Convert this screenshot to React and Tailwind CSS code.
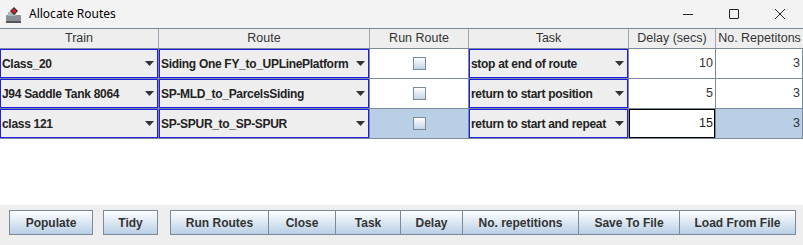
import React from 'react';

const cols = [
  { key: 'train', label: 'Train', w: 'w-[159px]' },
  { key: 'route', label: 'Route', w: 'w-[211px]' },
  { key: 'run', label: 'Run Route', w: 'w-[99px]' },
  { key: 'task', label: 'Task', w: 'w-[160px]' },
  { key: 'delay', label: 'Delay (secs)', w: 'w-[87px]' },
  { key: 'reps', label: 'No. Repetitons', w: 'w-[87px]' },
];

const rows = [
  { train: 'Class_20', route: 'Siding One FY_to_UPLinePlatform', task: 'stop at end of route', delay: 10, reps: 3 },
  { train: 'J94 Saddle Tank 8064', route: 'SP-MLD_to_ParcelsSiding', task: 'return to start position', delay: 5, reps: 3 },
  { train: 'class 121', route: 'SP-SPUR_to_SP-SPUR', task: 'return to start and repeat', delay: 15, reps: 3, selected: true },
];

function Combo({ value }) {
  return (
    <div className="flex h-full w-full items-center border border-[#1f1fe8] bg-[#eeeeee] pl-[1px] pr-[3px]">
      <span className="min-w-0 flex-1 overflow-hidden whitespace-nowrap text-[12px] font-bold tracking-[-0.3px] text-[#222]">{value}</span>
      <svg width="9" height="5" viewBox="0 0 9 5" className="ml-[2px] shrink-0">
        <path d="M0 0h9L4.5 5z" fill="#333" />
      </svg>
    </div>
  );
}

function Check() {
  return (
    <div className="h-[13px] w-[13px] border border-[#7a8a99] bg-gradient-to-b from-white to-[#c4d4e6]" />
  );
}

function TitleIcon() {
  return (
    <svg width="18" height="18" viewBox="0 0 18 18">
      <rect x="1" y="9" width="15" height="6" rx="1" fill="#8a8f96" />
      <rect x="3" y="6" width="8" height="4" fill="#b0b5bb" />
      <path d="M9 1l4 4-4 4-4-4z" fill="#333" />
      <circle cx="9" cy="5" r="2" fill="#e0202a" />
      <rect x="1" y="15" width="15" height="2" fill="#555" />
    </svg>
  );
}

const buttons1 = ['Run Routes', 'Close', 'Task', 'Delay', 'No. repetitions', 'Save To File', 'Load From File'];
const btnW = ['w-[99px]', 'w-[68px]', 'w-[66px]', 'w-[63px]', 'w-[117px]', 'w-[102px]', 'w-[117px]'];

function Btn({ children, className }) {
  return (
    <button
      type="button"
      className={`h-[25px] shrink-0 border border-[#7a8a99] bg-gradient-to-b from-white to-[#b8cfe5] text-[12px] font-bold text-[#333] ${className}`}
    >
      {children}
    </button>
  );
}

export default function App() {
  return (
    <div className="flex h-[245px] w-[803px] flex-col overflow-hidden bg-[#eeeeee] font-['Liberation_Sans',Arial,sans-serif]">
      <div className="flex h-[28px] shrink-0 items-center bg-[#f3f3f3]">
        <div className="ml-[5px] mt-[1px]"><TitleIcon /></div>
        <span className="ml-[6px] font-['Noto_Sans',sans-serif] text-[12px] text-black">Allocate Routes</span>
        <div className="ml-auto flex h-full items-center">
          <div className="flex w-[46px] justify-center">
            <div className="h-px w-[10px] bg-[#222]" />
          </div>
          <div className="flex w-[46px] justify-center">
            <div className="h-[10px] w-[10px] rounded-[1px] border border-[#222]" />
          </div>
          <div className="flex w-[46px] justify-center">
            <svg width="12" height="12" viewBox="0 0 12 12">
              <path d="M1 1l10 10M11 1L1 11" stroke="#222" strokeWidth="1" />
            </svg>
          </div>
        </div>
      </div>

      <div className="flex h-[177px] shrink-0 flex-col border-t border-[#7a8a99] bg-white">
        <div className="flex h-[20px] shrink-0 border-b border-[#7a8a99] bg-[#eeeeee]">
          {cols.map((c, i) => (
            <div
              key={c.key}
              className={`${c.w} flex shrink-0 items-center justify-center border-r border-[#9aa8b6] text-[12.5px] text-[#333] ${i === 5 ? 'border-r-0' : ''}`}
            >
              {c.label}
            </div>
          ))}
        </div>
        {rows.map((r) => (
          <div key={r.train} className="flex h-[30px] shrink-0 border-b border-[#7a8a99]">
            <div className={`${cols[0].w} shrink-0 border-r border-[#7a8a99]`}>
              <Combo value={r.train} />
            </div>
            <div className={`${cols[1].w} shrink-0 border-r border-[#7a8a99]`}>
              <Combo value={r.route} />
            </div>
            <div className={`${cols[2].w} flex shrink-0 items-center justify-center border-r border-[#7a8a99] ${r.selected ? 'bg-[#b8cfe5]' : ''}`}>
              <Check />
            </div>
            <div className={`${cols[3].w} shrink-0 border-r border-[#7a8a99]`}>
              <Combo value={r.task} />
            </div>
            <div className={`${cols[4].w} flex shrink-0 items-center justify-end border-r border-[#7a8a99] text-[12.5px] text-[#333]`}>
              {r.selected ? (
                <div className="flex h-full w-full items-center justify-end border border-black bg-white pr-[1px] text-[#222]">{r.delay}</div>
              ) : (
                <span className="pr-[2px]">{r.delay}</span>
              )}
            </div>
            <div className={`${cols[5].w} flex shrink-0 items-center justify-end border-r border-[#7a8a99] pr-[2px] text-[12.5px] text-[#333] ${r.selected ? 'bg-[#b8cfe5]' : ''}`}>
              {r.reps}
            </div>
          </div>
        ))}
      </div>

      <div className="flex shrink-0 pl-[9px] pt-[5px]">
        <Btn className="w-[84px]">Populate</Btn>
        <Btn className="ml-[10px] w-[55px]">Tidy</Btn>
        <div className="ml-[12px] flex">
          {buttons1.map((b, i) => (
            <Btn key={b} className={`${btnW[i]} ${i > 0 ? '-ml-px' : ''}`}>{b}</Btn>
          ))}
        </div>
      </div>
    </div>
  );
}
